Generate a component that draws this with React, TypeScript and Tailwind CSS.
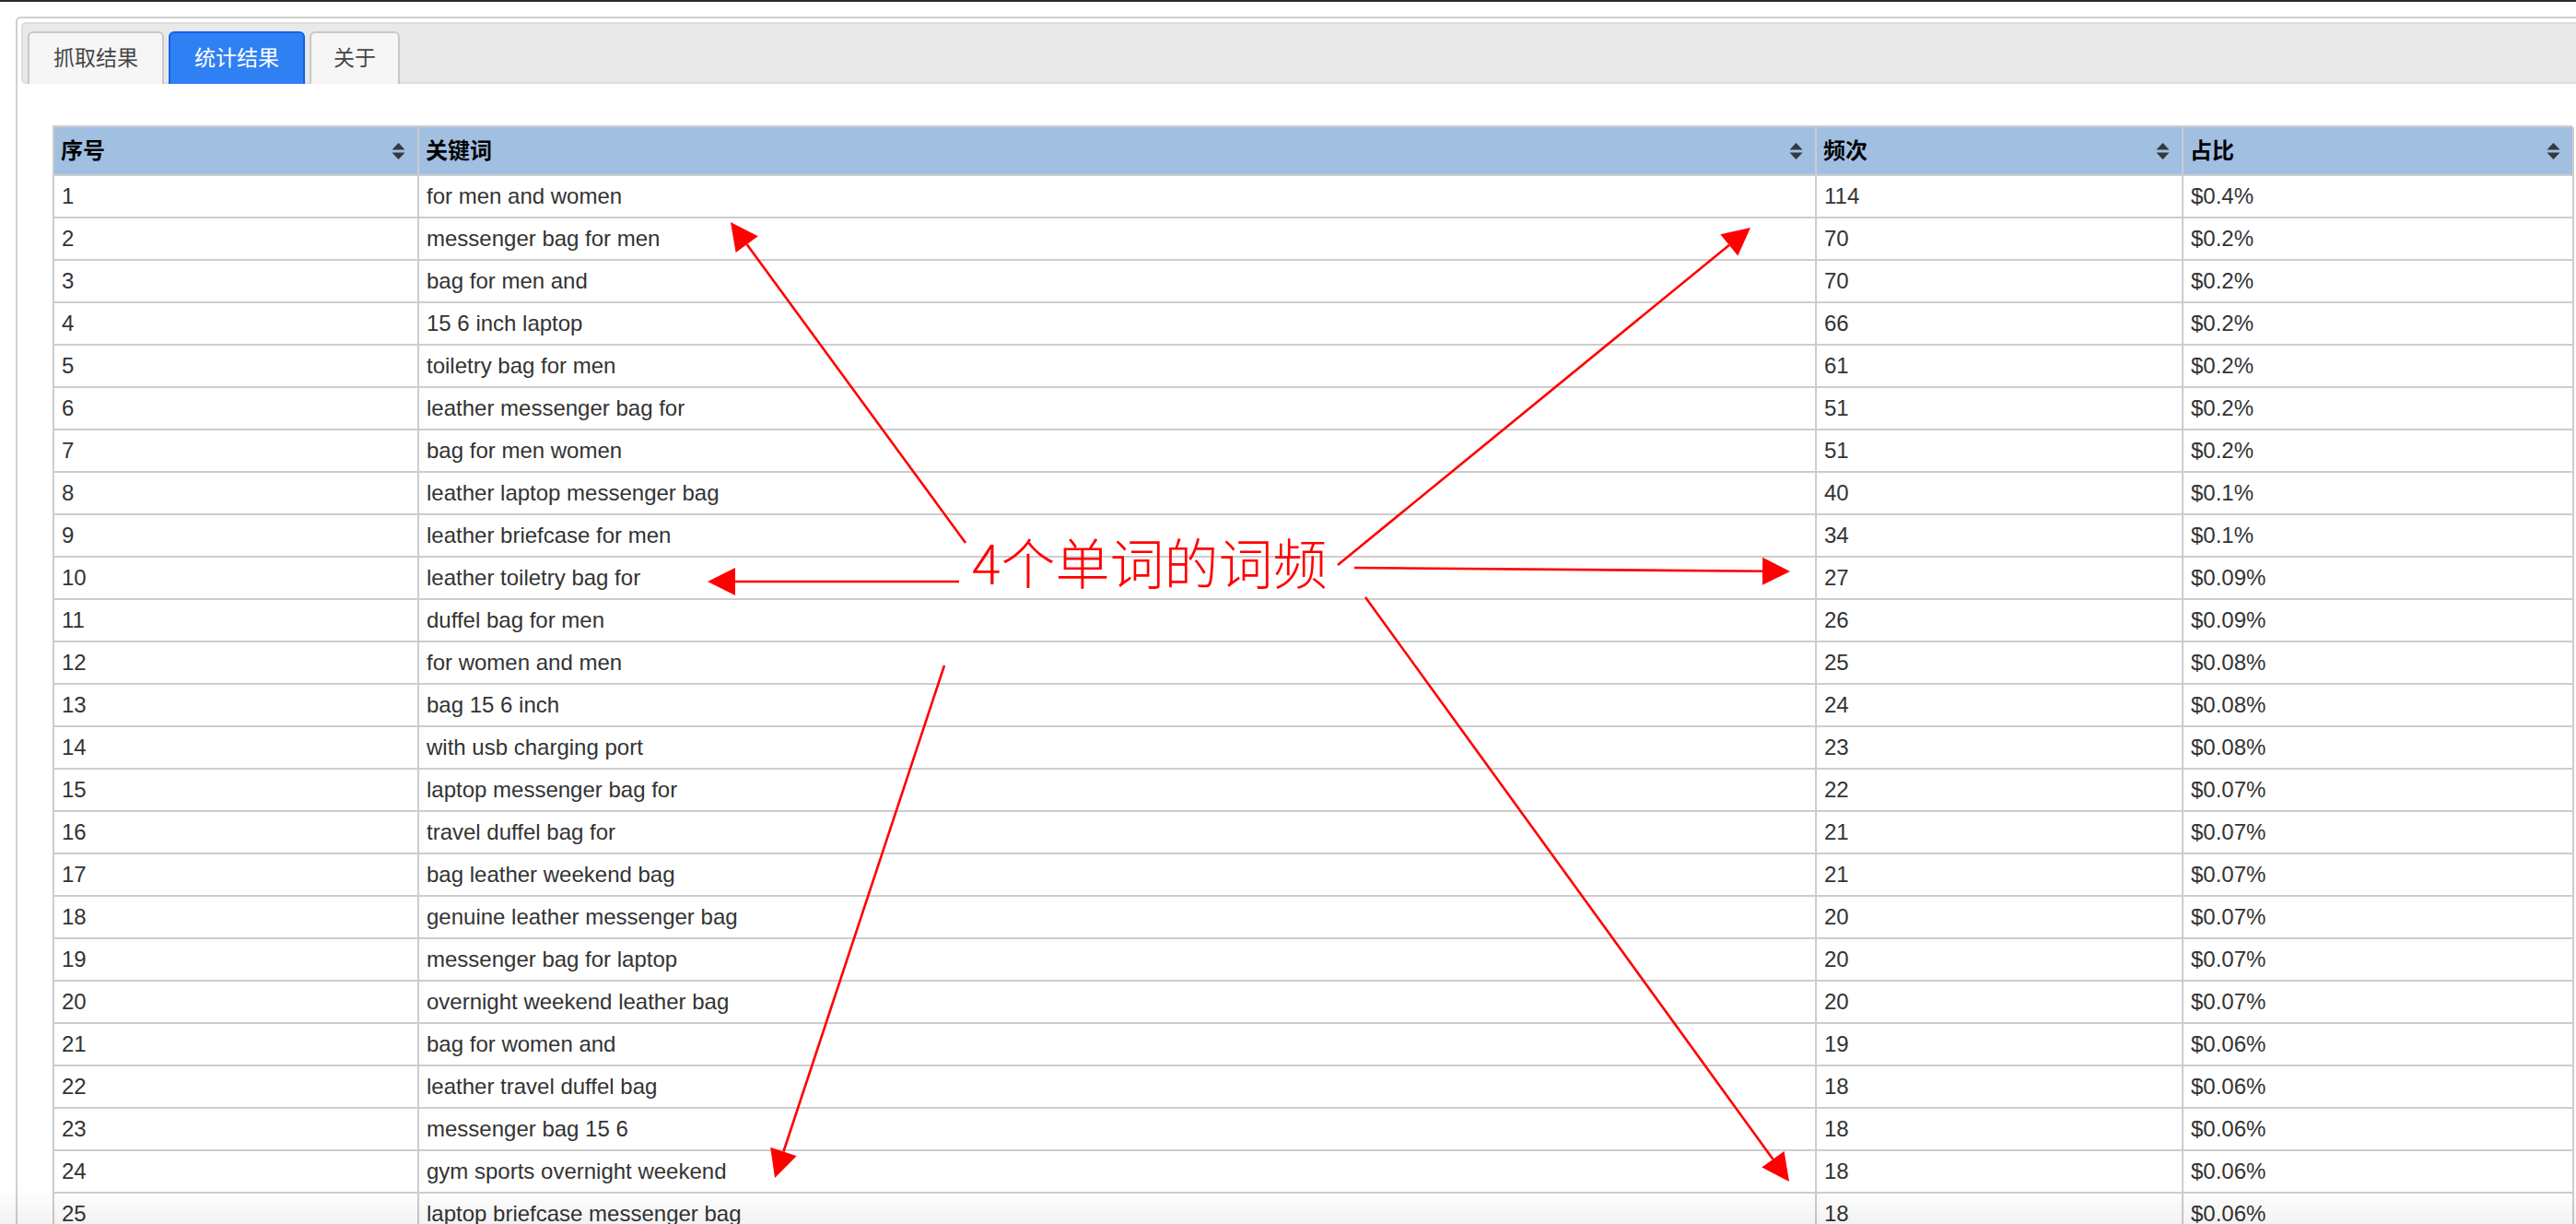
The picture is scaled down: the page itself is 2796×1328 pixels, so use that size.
import type { ReactNode } from 'react'

type Row = [number, string, number, string]

const rows: Row[] = [
  [1, 'for men and women', 114, '$0.4%'],
  [2, 'messenger bag for men', 70, '$0.2%'],
  [3, 'bag for men and', 70, '$0.2%'],
  [4, '15 6 inch laptop', 66, '$0.2%'],
  [5, 'toiletry bag for men', 61, '$0.2%'],
  [6, 'leather messenger bag for', 51, '$0.2%'],
  [7, 'bag for men women', 51, '$0.2%'],
  [8, 'leather laptop messenger bag', 40, '$0.1%'],
  [9, 'leather briefcase for men', 34, '$0.1%'],
  [10, 'leather toiletry bag for', 27, '$0.09%'],
  [11, 'duffel bag for men', 26, '$0.09%'],
  [12, 'for women and men', 25, '$0.08%'],
  [13, 'bag 15 6 inch', 24, '$0.08%'],
  [14, 'with usb charging port', 23, '$0.08%'],
  [15, 'laptop messenger bag for', 22, '$0.07%'],
  [16, 'travel duffel bag for', 21, '$0.07%'],
  [17, 'bag leather weekend bag', 21, '$0.07%'],
  [18, 'genuine leather messenger bag', 20, '$0.07%'],
  [19, 'messenger bag for laptop', 20, '$0.07%'],
  [20, 'overnight weekend leather bag', 20, '$0.07%'],
  [21, 'bag for women and', 19, '$0.06%'],
  [22, 'leather travel duffel bag', 18, '$0.06%'],
  [23, 'messenger bag 15 6', 18, '$0.06%'],
  [24, 'gym sports overnight weekend', 18, '$0.06%'],
  [25, 'laptop briefcase messenger bag', 18, '$0.06%'],
]

const columns = ['序号', '关键词', '频次', '占比']

// tail -> tip, in page pixels
const arrows: [number, number, number, number][] = [
  [1048, 589, 793, 241],
  [1452, 613, 1900, 247],
  [1041, 631, 768, 631],
  [1470, 616, 1943, 620],
  [1025, 722, 841, 1278],
  [1482, 648, 1942, 1282],
]

function SortIcon() {
  return (
    <svg width="15" height="18" viewBox="0 0 15 18" className="shrink-0">
      <path d="M7.5 0 L14.5 7.5 L0.5 7.5 Z" fill="#34393d" />
      <path d="M0.5 10.5 L14.5 10.5 L7.5 18 Z" fill="#34393d" />
    </svg>
  )
}

function Tab({ active, children, w }: { active?: boolean; children: ReactNode; w: string }) {
  return (
    <div
      className={
        'h-[57px] -mb-[2px] mr-[5px] flex items-center justify-center rounded-t-[6px] border-2 border-b-0 text-[23px] ' +
        w +
        (active
          ? ' bg-[#2f80f3] border-[#0f62ea] text-white'
          : ' bg-[#f6f6f6] border-[#c8c8c8] text-[#454545]')
      }
    >
      {children}
    </div>
  )
}

function Annotation() {
  return (
    <>
      <svg className="absolute left-0 top-0 pointer-events-none" width="2796" height="1328">
        {arrows.map(([x1, y1, x2, y2], i) => {
          const dx = x2 - x1
          const dy = y2 - y1
          const d = Math.hypot(dx, dy)
          const ux = dx / d
          const uy = dy / d
          const len = 30
          const hw = 15
          const bx = x2 - ux * len
          const by = y2 - uy * len
          const pts = `${x2},${y2} ${bx - uy * hw},${by + ux * hw} ${bx + uy * hw},${by - ux * hw}`
          return (
            <g key={i}>
              <line x1={x1} y1={y1} x2={bx} y2={by} stroke="#ff0000" strokeWidth="2.6" />
              <polygon points={pts} fill="#ff0000" />
            </g>
          )
        })}
      </svg>
      <div className="absolute left-[1055px] top-[579px] text-[59px] leading-none font-light text-[#ff0000] whitespace-nowrap font-['Noto_Sans_CJK_SC',sans-serif]">
        4个单词的词频
      </div>
    </>
  )
}

export default function App() {
  return (
    <div className="relative w-[2796px] h-[1328px] overflow-hidden bg-white font-['Liberation_Sans','Noto_Sans_CJK_SC',sans-serif]">
      <div className="h-[2px] bg-[#2b2b2b]" />
      <div className="ml-[17px] mt-[16px] w-[2820px] h-[1400px] border-2 border-[#d0d0d0] rounded-[5px] p-[4px]">
        <div className="h-[67px] bg-[#e9e9e9] border-2 border-[#dddddd] rounded-[5px] flex items-end pl-[5px]">
          <Tab w="w-[148px]">抓取结果</Tab>
          <Tab w="w-[148px]" active>
            统计结果
          </Tab>
          <Tab w="w-[98px]">关于</Tab>
        </div>

        <div className="ml-[34px] mt-[45px] w-[2735px] border-l-2 border-t-2 border-[#cdcdcd] text-[24px] text-[#333333]">
          <div className="grid grid-cols-[396px_1517px_398px_424px] bg-[#a1bfe1]">
            {columns.map(c => (
              <div
                key={c}
                className="h-[53px] border-r-2 border-b-2 border-[#cdcdcd] flex items-center justify-between pl-[7px] pr-[13px] font-bold text-black"
              >
                <span>{c}</span>
                <SortIcon />
              </div>
            ))}
          </div>
          {rows.map(r => (
            <div key={r[0]} className="grid grid-cols-[396px_1517px_398px_424px]">
              {r.map((v, j) => (
                <div key={j} className="h-[46px] border-r-2 border-b-2 border-[#cdcdcd] flex items-center pl-[8px]">
                  {v}
                </div>
              ))}
            </div>
          ))}
        </div>
      </div>

      <div className="absolute left-0 right-0 bottom-0 h-[40px] bg-gradient-to-b from-transparent to-black/[0.05] pointer-events-none" />
      <Annotation />
    </div>
  )
}
